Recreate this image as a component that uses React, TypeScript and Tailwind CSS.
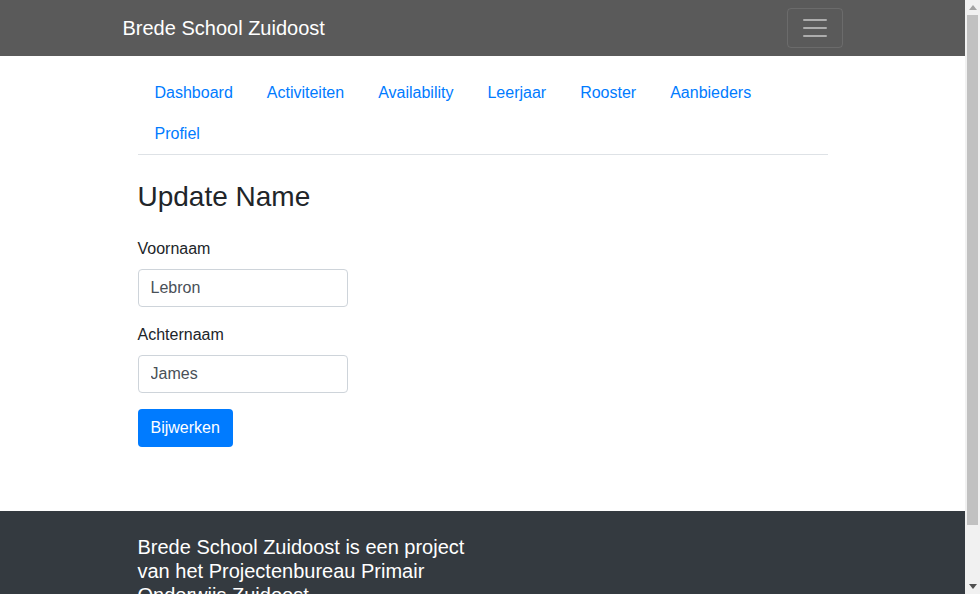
import React from "react";

export default function App() {
  const links = ["Dashboard", "Activiteiten", "Availability", "Leerjaar", "Rooster", "Aanbieders", "Profiel"];
  return (
    <div className="h-[594px] overflow-hidden flex bg-white text-[#212529]" style={{ fontFamily: '"Liberation Sans", Arial, sans-serif' }}>
      <div className="flex-1 min-w-0">
        <nav className="bg-[#5a5a5a] py-2">
          <div className="mx-auto w-[720px] flex items-center justify-between">
            <a className="text-white text-[20px] leading-[30px] py-[5px]">Brede School Zuidoost</a>
            <button className="w-[56px] h-[40px] border border-white/10 rounded flex items-center justify-center">
              <svg width="30" height="30" viewBox="0 0 30 30">
                <path d="M4 7h22M4 15h22M4 23h22" stroke="rgba(255,255,255,0.5)" strokeWidth="2" strokeLinecap="round" />
              </svg>
            </button>
          </div>
        </nav>
        <div className="mx-auto w-[720px] px-[15px]">
          <ul className="mt-[16.5px] flex flex-wrap border-b border-[#dee2e6]">
            {links.map((l) => (
              <li key={l}>
                <a className="block px-[17px] py-[8.4px] text-[16px] leading-6 text-[#007bff]">{l}</a>
              </li>
            ))}
          </ul>
          <h3 className="mt-[25px] mb-[23px] text-[28px] leading-[1.2] font-medium">Update Name</h3>
          <form className="pb-16">
            <div className="mb-4">
              <label className="block mb-2 text-[16px] leading-6">Voornaam</label>
              <input
                defaultValue="Lebron"
                className="block w-[210px] h-[38px] px-3 border border-[#ced4da] rounded text-[16px] text-[#495057]"
              />
            </div>
            <div className="mb-4">
              <label className="block mb-2 text-[16px] leading-6">Achternaam</label>
              <input
                defaultValue="James"
                className="block w-[210px] h-[38px] px-3 border border-[#ced4da] rounded text-[16px] text-[#495057]"
              />
            </div>
            <button type="button" className="h-[38px] px-[13px] bg-[#007bff] text-white rounded text-[16px] leading-6">
              Bijwerken
            </button>
          </form>
        </div>
        <footer className="bg-[#343a40] text-white pt-6 pb-12">
          <div className="mx-auto w-[720px] px-[15px] flex">
            <div className="w-[330px]">
              <h5 className="text-[20px] leading-[1.2] font-medium">
                Brede School Zuidoost is een project van het Projectenbureau Primair Onderwijs Zuidoost
              </h5>
            </div>
          </div>
        </footer>
      </div>
      <div className="w-[15px] shrink-0 bg-[#f1f1f1] flex flex-col items-center">
        <div className="h-[15px] w-full flex items-center justify-center">
          <svg width="8" height="5" viewBox="0 0 8 5"><path d="M0 5L4 0L8 5Z" fill="#a3a3a3" /></svg>
        </div>
        <div className="w-[11px] h-[510px] bg-[#c1c1c1]" />
        <div className="flex-1" />
        <div className="h-[15px] w-full flex items-center justify-center">
          <svg width="8" height="5" viewBox="0 0 8 5"><path d="M0 0L4 5L8 0Z" fill="#505050" /></svg>
        </div>
      </div>
    </div>
  );
}
